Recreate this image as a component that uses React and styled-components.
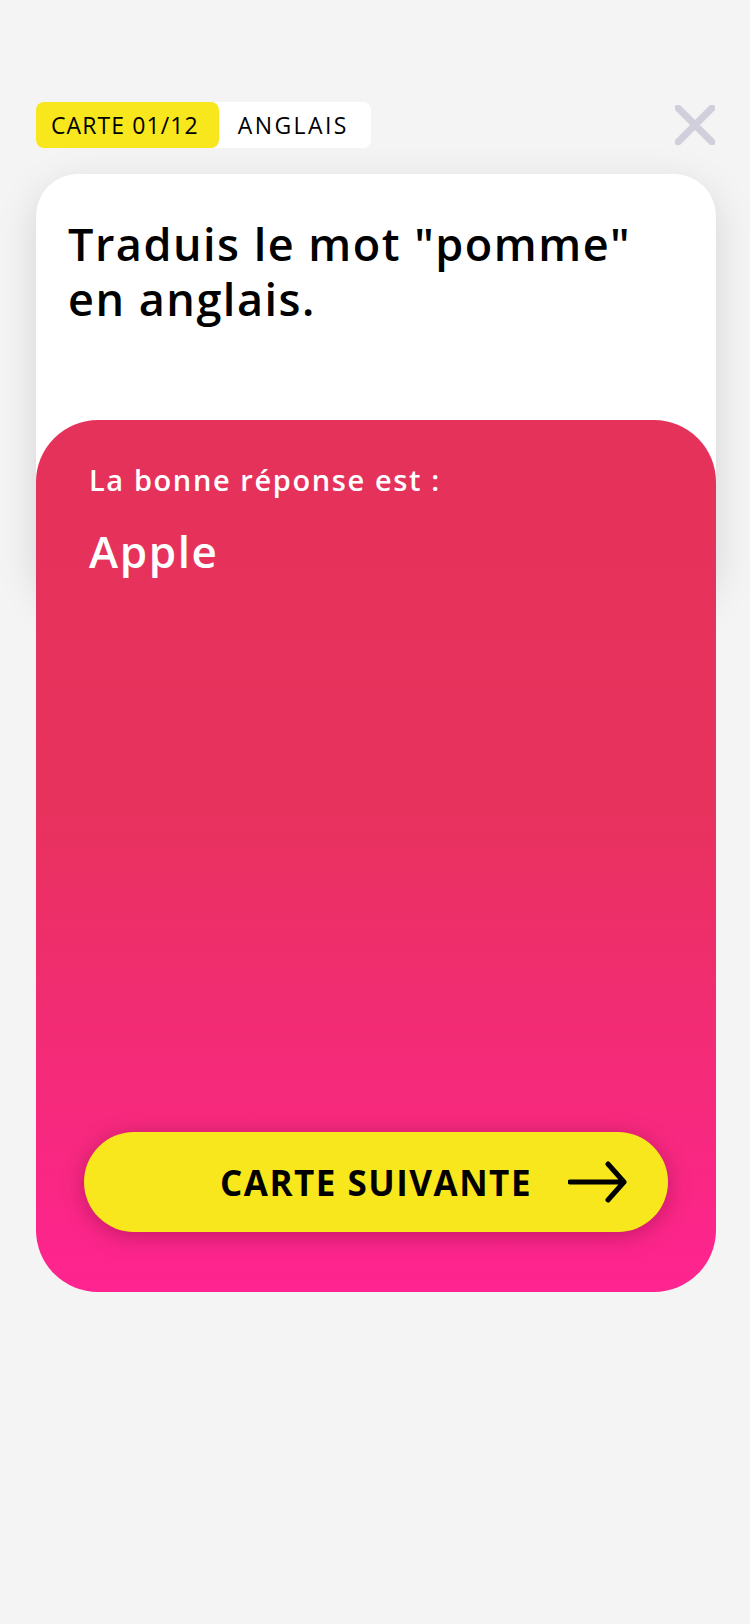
import styled, { createGlobalStyle } from "styled-components"

const GlobalStyle = createGlobalStyle`
  body {
    margin: 0;
    background: #f4f4f4;
    font-family: "Open Sans", "Noto Sans", sans-serif;
  }
`

function CloseIcon() {
  return (
    <svg width="40" height="40" viewBox="0 0 40 40" fill="none">
      <path d="M3 3 L37 37 M37 3 L3 37" stroke="#d0cfdb" strokeWidth="7" strokeLinecap="round" />
    </svg>
  )
}

function ArrowIcon() {
  return (
    <svg width="60" height="42" viewBox="0 0 60 42" fill="none">
      <path d="M2 21 H56 M40 3 L56 21 L40 39" stroke="#000" strokeWidth="5" strokeLinecap="round" strokeLinejoin="round" />
    </svg>
  )
}

function App() {
  return (
    <Page>
      <GlobalStyle />
      <TopBar>
        <Tags>
          <Tag $highlight>CARTE 01/12</Tag>
          <Tag>ANGLAIS</Tag>
        </Tags>
        <CloseButton aria-label="Fermer">
          <CloseIcon />
        </CloseButton>
      </TopBar>
      <CardStack>
        <QuestionCard>
          <Question>Traduis le mot "pomme" en anglais.</Question>
        </QuestionCard>
        <AnswerCard>
          <AnswerLabel>La bonne réponse est :</AnswerLabel>
          <AnswerText>Apple</AnswerText>
          <NextButton>
            <span>CARTE SUIVANTE</span>
            <ArrowIcon />
          </NextButton>
        </AnswerCard>
      </CardStack>
    </Page>
  )
}

const Page = styled.div`
  padding: 102px 34px 0 36px;
  min-height: 1624px;
  box-sizing: border-box;
`

const TopBar = styled.div`
  display: flex;
  justify-content: space-between;
  align-items: center;
  height: 46px;
`

const Tags = styled.div`
  display: flex;
  height: 46px;
  background: #fff;
  border-radius: 8px;
`

const Tag = styled.div`
  display: flex;
  align-items: center;
  padding: ${p => (p.$highlight ? "0 20px 0 15px" : "0 22px 0 19px")};
  background: ${p => (p.$highlight ? "#f8e71c" : "transparent")};
  border-radius: 8px;
  font-size: 23px;
  letter-spacing: ${p => (p.$highlight ? "1.1px" : "2.4px")};
  color: #000;
`

const CloseButton = styled.button`
  border: none;
  background: none;
  padding: 0;
  margin-right: 1px;
  display: flex;
`

const CardStack = styled.div`
  margin-top: 26px;
  display: flex;
  flex-direction: column;
`

const QuestionCard = styled.div`
  background: #fff;
  border-radius: 42px;
  height: 420px;
  padding: 42px 50px 0 32px;
  box-sizing: border-box;
  box-shadow: 0 12px 40px rgba(0, 0, 0, 0.13);
`

const Question = styled.h1`
  margin: 0;
  font-size: 45px;
  line-height: 55px;
  font-weight: 600;
  letter-spacing: 1.5px;
  color: #000;
`

const AnswerCard = styled.div`
  position: relative;
  margin-top: -174px;
  height: 872px;
  box-sizing: border-box;
  border-radius: 62px;
  padding: 42px 48px 60px 53px;
  display: flex;
  flex-direction: column;
  background: linear-gradient(180deg, #e5325a 0%, #e8325e 45%, #ff2490 100%);
  color: #fff;
`

const AnswerLabel = styled.div`
  font-size: 29px;
  font-weight: 600;
  line-height: 36px;
  letter-spacing: 1.6px;
`

const AnswerText = styled.div`
  margin-top: 26px;
  font-size: 44px;
  font-weight: 600;
  line-height: 54px;
  letter-spacing: 1.6px;
`

const NextButton = styled.button`
  margin-top: auto;
  margin-left: -5px;
  height: 100px;
  border: none;
  border-radius: 50px;
  background: #f8e71c;
  box-shadow: 0 4px 22px rgba(90, 0, 40, 0.35);
  display: flex;
  align-items: center;
  justify-content: flex-end;
  gap: 36px;
  padding: 0 40px 0 0;
  font-family: "Open Sans", "Noto Sans", sans-serif;
  font-size: 35px;
  font-weight: 700;
  letter-spacing: 1.5px;
  color: #000;
`

export default App
